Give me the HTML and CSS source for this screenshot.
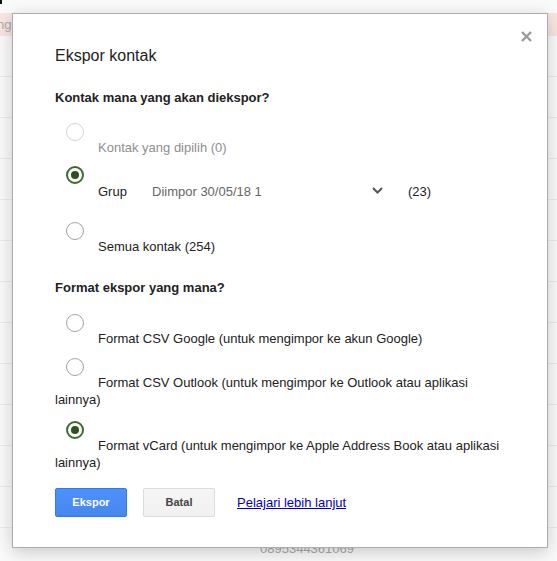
FILE: index.html
```html
<!DOCTYPE html>
<html lang="id">
<head>
<meta charset="utf-8">
<title>Ekspor kontak</title>
<link rel="stylesheet" href="styles.css">
</head>
<body>
<div class="page">
  <div class="topmark"></div>
  <div class="alert"><span class="alert-text">ng.</span></div>
  <div class="row"></div>
  <div class="row"></div>
  <div class="row"></div>
  <div class="row"></div>
  <div class="row"></div>
  <div class="row"></div>
  <div class="row"></div>
  <div class="row"></div>
  <div class="row"></div>
  <div class="row"></div>
  <div class="row"></div>
  <div class="row"></div>
  <div class="row phone-row"><span class="phone">0895344361069</span></div>
</div>

<div class="dialog">
  <button class="close" aria-label="Tutup">
    <svg width="11" height="11" viewBox="0 0 11 11"><path d="M1 1 L10 10 M10 1 L1 10" stroke="#9a9a9a" stroke-width="2.4" fill="none"/></svg>
  </button>
  <h1 class="title">Ekspor kontak</h1>

  <h2 class="section s1">Kontak mana yang akan diekspor?</h2>
  <div class="opt o1 disabled">
    <span class="radio"></span>
    <div class="label">Kontak yang dipilih (0)</div>
  </div>
  <div class="opt o2">
    <span class="radio checked"></span>
    <div class="grouprow">
      <span class="grp">Grup</span>
      <span class="select">
        <span class="select-text">Diimpor 30/05/18 1</span>
        <svg class="chev" width="11" height="7" viewBox="0 0 11 7"><path d="M1 1 L5.5 5.5 L10 1" stroke="#555" stroke-width="2" fill="none"/></svg>
      </span>
      <span class="count">(23)</span>
    </div>
  </div>
  <div class="opt o3">
    <span class="radio"></span>
    <div class="label">Semua kontak (254)</div>
  </div>

  <h2 class="section s2">Format ekspor yang mana?</h2>
  <div class="opt o4">
    <span class="radio"></span>
    <div class="label">Format CSV Google (untuk mengimpor ke akun Google)</div>
  </div>
  <div class="opt o5">
    <span class="radio"></span>
    <div class="label">Format CSV Outlook (untuk mengimpor ke Outlook atau aplikasi lainnya)</div>
  </div>
  <div class="opt o6">
    <span class="radio checked"></span>
    <div class="label">Format vCard (untuk mengimpor ke Apple Address Book atau aplikasi lainnya)</div>
  </div>

  <div class="actions">
    <button class="btn btn-primary">Ekspor</button>
    <button class="btn btn-default">Batal</button>
    <a class="learn" href="#">Pelajari lebih lanjut</a>
  </div>
</div>
</body>
</html>
```

FILE: styles.css
```css
html, body {
  margin: 0;
  padding: 0;
  background: #fff;
  font-family: "Liberation Sans", Arial, sans-serif;
  overflow: hidden;
}

.page {
  width: 557px;
  height: 561px;
  overflow: hidden;
  background: #fafafa;
}

.topmark {
  position: absolute;
  left: 0;
  top: 0;
  width: 2px;
  height: 4px;
  background: #111;
}

.alert {
  margin-top: 13px;
  height: 23px;
  background: #f9e6e3;
  display: flex;
  align-items: center;
}

.alert-text {
  margin-left: -3px;
  font-size: 13px;
  color: #aaa;
}

.row {
  height: 41px;
  box-sizing: border-box;
  border-bottom: 1px solid #ebebeb;
  position: relative;
}

.phone-row {
  display: flex;
  align-items: flex-start;
}

.phone {
  margin-left: 260px;
  margin-top: 13px;
  font-size: 13px;
  color: #aaa;
}

.dialog {
  position: absolute;
  left: 12px;
  top: 13px;
  width: 536px;
  box-sizing: border-box;
  background: #fff;
  border: 1px solid #acacac;
  box-shadow: 0 4px 16px rgba(0, 0, 0, 0.2);
  padding: 32px 42px 30px 42px;
  color: #222;
  font-size: 13px;
}

.close {
  position: absolute;
  top: 17px;
  right: 15px;
  width: 11px;
  height: 11px;
  padding: 0;
  border: 0;
  background: none;
  display: block;
}

.close svg {
  display: block;
}

.title {
  margin: 0;
  font-size: 16px;
  line-height: 20px;
  font-weight: normal;
  color: #222;
}

.section {
  margin: 0;
  font-size: 13px;
  line-height: 17px;
  font-weight: bold;
  color: #222;
}

.s1 { margin-top: 23px; }
.s2 { margin-top: 24px; }

.radio {
  display: block;
  width: 18px;
  height: 18px;
  box-sizing: border-box;
  border-radius: 50%;
  border: 1.5px solid #a3a3a3;
  margin-left: 11px;
  position: relative;
  background: #fff;
}

.disabled .radio {
  border-color: #d6d6d6;
}

.radio.checked {
  border: 2px solid #3e6a2b;
}

.radio.checked::after {
  content: "";
  position: absolute;
  left: 3px;
  top: 3px;
  width: 8px;
  height: 8px;
  border-radius: 50%;
  background: #2f511f;
}

.label {
  margin-top: -2px;
  line-height: 17px;
  text-indent: 43px;
  color: #222;
}

.disabled .label {
  color: #8e8e8e;
}

.o1 { margin-top: 17px; }
.o2 { margin-top: 10px; }
.o3 { margin-top: 20px; }
.o4 { margin-top: 18px; }
.o5 { margin-top: 11px; }
.o6 { margin-top: 13px; }

.grouprow {
  display: flex;
  align-items: center;
  height: 22px;
  margin-top: -4px;
  padding-left: 43px;
}

.grp {
  width: 54px;
  color: #222;
}

.select {
  width: 240px;
  display: flex;
  align-items: center;
  justify-content: space-between;
  padding-right: 9px;
  box-sizing: border-box;
  color: #666;
}

.chev {
  display: block;
  margin-top: -1px;
}

.count {
  margin-left: 16px;
  color: #222;
}

.actions {
  margin-top: 17px;
  display: flex;
  align-items: center;
}

.btn {
  height: 29px;
  min-width: 72px;
  box-sizing: border-box;
  padding: 0 8px;
  border-radius: 2px;
  font-family: "Liberation Sans", Arial, sans-serif;
  font-size: 11px;
  font-weight: bold;
  line-height: 27px;
  cursor: pointer;
}

.btn-primary {
  background: linear-gradient(#4d90fe, #4787ed);
  border: 1px solid #3079ed;
  color: #fff;
}

.btn-default {
  margin-left: 16px;
  background: linear-gradient(#f5f5f5, #f1f1f1);
  border: 1px solid #dcdcdc;
  color: #444;
}

.learn {
  margin-left: 22px;
  font-size: 13px;
  color: #0000cc;
  text-decoration: underline;
}
```
